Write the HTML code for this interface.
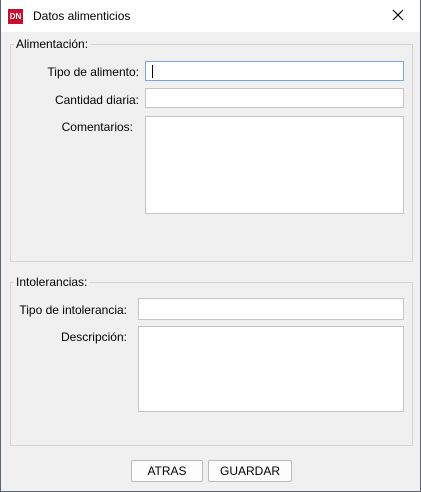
<!DOCTYPE html>
<html><head><style>
*{margin:0;padding:0;box-sizing:border-box}
body{width:421px;height:492px;background:#f0f0f0;font-family:"Liberation Sans",sans-serif;font-size:12px;color:#000;position:relative;overflow:hidden}
.frame{position:absolute;left:0;top:0;width:421px;height:492px;border:1px solid #5a6470;border-top:none;pointer-events:none}
.title{position:absolute;left:0;top:0;width:421px;height:32px;background:#fff}
.logo{position:absolute;left:8px;top:9px;width:15px;height:15px;background:#c8102e;color:#fff;font-size:8px;font-weight:bold;text-align:center;line-height:15px}
.tt{position:absolute;left:33px;top:9px}
.x{position:absolute;left:391px;top:8px}
.grp{position:absolute;border:1px solid #d5d5d5}
.leg{position:absolute;background:#f0f0f0;padding:0 2px;top:-8px;left:3px}
.in{position:absolute;background:#fff;border:1px solid #c4c4c4}
.lb{position:absolute;text-align:right}
.btn{position:absolute;background:#fdfdfd;border:1px solid #bcbcbc;border-radius:2px;text-align:center;line-height:20px}
</style></head><body>
<div class="title"><div class="logo">DN</div><div class="tt">Datos alimenticios</div>
<svg class="x" width="14" height="14" viewBox="0 0 14 14"><path d="M2 2L12 12M12 2L2 12" stroke="#000" stroke-width="1.2"/></svg></div>
<div class="grp" style="left:10px;top:44px;width:403px;height:218px"><div class="leg">Alimentación:</div></div>
<div class="lb" style="right:282px;top:65px">Tipo de alimento:</div>
<div class="in" style="left:145px;top:61px;width:259px;height:20px;border-color:#7aa7d8"><div style="position:absolute;left:6px;top:3px;width:1px;height:13px;background:#000"></div></div>
<div class="lb" style="right:282px;top:93px">Cantidad diaria:</div>
<div class="in" style="left:145px;top:88px;width:259px;height:20px"></div>
<div class="lb" style="right:288px;top:120px">Comentarios:</div>
<div class="in" style="left:145px;top:116px;width:259px;height:98px"></div>
<div class="grp" style="left:10px;top:282px;width:403px;height:164px"><div class="leg">Intolerancias:</div></div>
<div class="lb" style="right:294px;top:303px">Tipo de intolerancia:</div>
<div class="in" style="left:138px;top:298px;width:266px;height:22px"></div>
<div class="lb" style="right:294px;top:330px">Descripción:</div>
<div class="in" style="left:138px;top:326px;width:266px;height:86px"></div>
<div class="btn" style="left:131px;top:460px;width:72px;height:22px">ATRAS</div>
<div class="btn" style="left:208px;top:460px;width:84px;height:22px">GUARDAR</div>
<div class="frame"></div>
</body></html>
